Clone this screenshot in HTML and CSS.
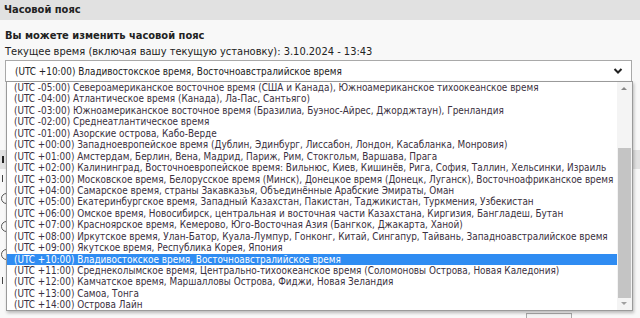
FILE: index.html
```html
<!doctype html>
<html lang="ru">
<head>
<meta charset="utf-8">
<title>Часовой пояс</title>
<link rel="stylesheet" href="styles.css">
</head>
<body>

<div class="page">
  <div class="section-head">Часовой пояс</div>

  <div class="section-body">
    <div class="tz-title">Вы можете изменить часовой пояс</div>
    <div class="tz-now">Текущее время (включая вашу текущую установку): 3.10.2024 - 13:43</div>

    <div class="tz-picker">
      <div class="tz-select">
        <span>(UTC +10:00) Владивостокское время, Восточноавстралийское время</span>
        <svg class="chevron" width="10" height="8" viewBox="0 0 10 8"><path d="M1.5 2 L5 5.5 L8.5 2" fill="none" stroke="#222" stroke-width="2"/></svg>
      </div>

      <!-- opened list, lies over the rest of the form -->
      <div class="tz-list">
        <ul class="tz-options">
          <li>(UTC -05:00) Североамериканское восточное время (США и Канада), Южноамериканское тихоокеанское время</li>
          <li>(UTC -04:00) Атлантическое время (Канада), Ла-Пас, Сантьяго)</li>
          <li>(UTC -03:00) Южноамериканское восточное время (Бразилиа, Буэнос-Айрес, Джорджтаун), Гренландия</li>
          <li>(UTC -02:00) Среднеатлантическое время</li>
          <li>(UTC -01:00) Азорские острова, Кабо-Верде</li>
          <li>(UTC +00:00) Западноевропейское время (Дублин, Эдинбург, Лиссабон, Лондон, Касабланка, Монровия)</li>
          <li>(UTC +01:00) Амстердам, Берлин, Вена, Мадрид, Париж, Рим, Стокгольм, Варшава, Прага</li>
          <li>(UTC +02:00) Калининград, Восточноевропейское время: Вильнюс, Киев, Кишинёв, Рига, София, Таллин, Хельсинки, Израиль</li>
          <li>(UTC +03:00) Московское время, Белорусское время (Минск), Донецкое время (Донецк, Луганск), Восточноафриканское время</li>
          <li>(UTC +04:00) Самарское время, страны Закавказья, Объединённые Арабские Эмираты, Оман</li>
          <li>(UTC +05:00) Екатеринбургское время, Западный Казахстан, Пакистан, Таджикистан, Туркмения, Узбекистан</li>
          <li>(UTC +06:00) Омское время, Новосибирск, центральная и восточная части Казахстана, Киргизия, Бангладеш, Бутан</li>
          <li>(UTC +07:00) Красноярское время, Кемерово, Юго-Восточная Азия (Бангкок, Джакарта, Ханой)</li>
          <li>(UTC +08:00) Иркутское время, Улан-Батор, Куала-Лумпур, Гонконг, Китай, Сингапур, Тайвань, Западноавстралийское время</li>
          <li>(UTC +09:00) Якутское время, Республика Корея, Япония</li>
          <li class="selected">(UTC +10:00) Владивостокское время, Восточноавстралийское время</li>
          <li>(UTC +11:00) Среднеколымское время, Центрально-тихоокеанское время (Соломоновы Острова, Новая Каледония)</li>
          <li>(UTC +12:00) Камчатское время, Маршалловы Острова, Фиджи, Новая Зеландия</li>
          <li>(UTC +13:00) Самоа, Тонга</li>
          <li>(UTC +14:00) Острова Лайн</li>
        </ul>
        <div class="scrollbar">
          <span class="arrow up"></span>
          <div class="track"><div class="thumb"></div></div>
          <span class="arrow down"></span>
        </div>
      </div>
    </div>

    <!-- rest of the form, mostly hidden by the open list -->
    <div class="behind">
      <div class="sub-head"><span class="glyph bold"></span></div>
      <div class="behind-row"><span class="glyph"></span></div>
      <div class="behind-radio"><span class="radio"></span></div>
      <div class="behind-radio"><span class="radio"></span></div>
      <div class="behind-radio"><span class="radio"></span></div>
      <div class="behind-row last"><span class="glyph"></span></div>
      <div class="behind-actions"><span class="btn"></span></div>
    </div>
  </div>
</div>

</body>
</html>
```

FILE: styles.css
```css
html, body {
  margin: 0;
  padding: 0;
  background: #f8f8f8;
}

body {
  color: #222;
  font-family: "DejaVu Sans Condensed", "DejaVu Sans", sans-serif;
  font-size: 11px;
  overflow: hidden;
}

.page {
  height: 318px;
  overflow: hidden;
  width: 640px;
}

.section-head {
  background: #e1e1e1;
  font-weight: bold;
  height: 20px;
  line-height: 19px;
  padding-left: 4px;
}

.section-body {
  padding: 8px 8px 0 5px;
}

.tz-title {
  font-weight: bold;
  line-height: 15px;
}

.tz-now {
  line-height: 15px;
  margin-top: 1px;
}

.tz-picker {
  margin-top: 1px;
  position: relative;
}

.tz-select {
  align-items: center;
  background: #fff;
  border: 1px solid #a9a9a9;
  box-sizing: border-box;
  display: flex;
  height: 22px;
  justify-content: space-between;
  padding: 0 8px 0 9px;
  width: 627px;
}

.tz-select span {
  font-size: 9.9px;
}

.tz-list {
  background: #fff;
  border: 1px solid #9a9a9a;
  box-shadow: 1px 2px 3px rgba(0, 0, 0, 0.25);
  display: flex;
  height: 228px;
  left: 1px;
  position: absolute;
  top: 21px;
  width: 625px;
  z-index: 2;
}

.tz-options {
  flex: 1;
  font-size: 9.9px;
  list-style: none;
  margin: 0;
  overflow: hidden;
  padding: 0;
}

.tz-options li {
  color: #3a3040;
  height: 11.45px;
  line-height: 11.45px;
  padding-left: 7px;
  white-space: nowrap;
}

.tz-options li.selected {
  background: #2f8cf2;
  color: #fff;
}

.scrollbar {
  background: #f4f4f4;
  display: flex;
  flex-direction: column;
  width: 15px;
}

.scrollbar .track {
  flex: 1;
  padding-top: 54px;
}

.scrollbar .thumb {
  background: #c4c4c4;
  height: 150px;
  margin: 0 1px;
}

.scrollbar .arrow {
  height: 12px;
  position: relative;
}

.scrollbar .arrow::after {
  border-left: 3px solid transparent;
  border-right: 3px solid transparent;
  content: "";
  left: 4px;
  position: absolute;
}

.scrollbar .arrow.up::after {
  border-bottom: 3px solid #888;
  top: 5px;
}

.scrollbar .arrow.down::after {
  border-top: 3px solid #a0a0a0;
  top: 4px;
}

.behind {
  margin-left: -5px;
  margin-right: -8px;
}

.sub-head {
  align-items: center;
  background: #e1e1e1;
  display: flex;
  height: 19px;
  margin-top: 68px;
  padding-left: 2px;
}

.glyph {
  background: #444;
  display: inline-block;
  height: 7px;
  width: 1px;
}

.glyph.bold {
  background: #222;
  width: 2px;
}

.behind-row {
  align-items: center;
  display: flex;
  height: 18px;
  padding-left: 2px;
}

.behind-radio {
  box-sizing: border-box;
  height: 28px;
  padding-left: 1px;
  padding-top: 6px;
}

.radio {
  border: 1px solid #555;
  border-radius: 50%;
  display: inline-block;
  height: 9px;
  width: 9px;
}

.behind-actions {
  display: flex;
  justify-content: flex-end;
  margin-top: 24px;
  padding-right: 68px;
}

.btn {
  background: #f4f4f4;
  border: 1px solid #aaa;
  display: inline-block;
  height: 20px;
  width: 44px;
}
```
